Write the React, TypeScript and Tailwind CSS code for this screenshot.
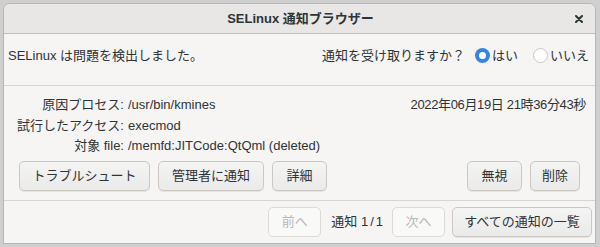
import React, { useState } from 'react';

function Btn({ children, disabled, className = '' }: { children: React.ReactNode; disabled?: boolean; className?: string }) {
  return (
    <button
      type="button"
      className={`h-[30px] rounded-[5px] border text-[13px] ${disabled ? 'border-[#dcdad7] bg-[#f9f9f8] text-[#b5b8b8]' : 'border-[#cdc7c2] bg-gradient-to-b from-[#f4f4f3] to-[#eaeaea] text-[#2e3436] shadow-[0_1px_0_rgba(0,0,0,0.07)]'} ${className}`}
    >
      {children}
    </button>
  );
}

function Radio({ checked, label, onClick }: { checked: boolean; label: string; onClick: () => void }) {
  return (
    <label className="flex items-center gap-[2px] cursor-pointer" onClick={onClick}>
      {checked ? (
        <span className="w-[15px] h-[15px] rounded-full bg-[#3584e4] flex items-center justify-center">
          <span className="w-[7px] h-[7px] rounded-full bg-white" />
        </span>
      ) : (
        <span className="w-[15px] h-[15px] rounded-full border border-[#cdc7c2] bg-white" />
      )}
      <span>{label}</span>
    </label>
  );
}

export default function App() {
  const [notify, setNotify] = useState(true);

  return (
    <div
      className="w-[600px] h-[247px] bg-[#cfcfcf] pt-[3px] px-[3px] pb-[3px]"
      style={{ fontFamily: '"Liberation Sans", "Noto Sans CJK JP", sans-serif' }}
    >
      <div className="w-[593px] h-[241px] rounded-t-[7px] border border-[#b8b6b3] bg-[#f6f5f4] text-[13px] text-[#2e3436] flex flex-col overflow-hidden">
        {/* title bar */}
        <div className="h-[30px] shrink-0 bg-[#e8e7e6] border-b border-[#c0bdba] flex items-center relative">
          <div className="flex-1 text-center font-bold text-[13px] pl-[2px]">SELinux 通知ブラウザー</div>
          <svg className="absolute right-[12px] top-[11px]" width="8" height="8" viewBox="0 0 8 8">
            <path d="M1 1 L7 7 M7 1 L1 7" stroke="#2e3436" strokeWidth="2" strokeLinecap="round" />
          </svg>
        </div>

        {/* question row */}
        <div className="h-[52px] shrink-0 flex items-center justify-between pl-[4px] pr-[6px] border-b border-[#d8d4d0] pb-[8px]">
          <span>SELinux は問題を検出しました。</span>
          <div className="flex items-center">
            <span className="mr-[10px]">通知を受け取りますか？</span>
            <Radio checked={notify} label="はい" onClick={() => setNotify(true)} />
            <span className="w-[15px]" />
            <Radio checked={!notify} label="いいえ" onClick={() => setNotify(false)} />
          </div>
        </div>

        {/* details */}
        <div className="shrink-0 pt-[9px] pl-[13px] pr-[9px] flex justify-between leading-[20.5px]">
          <div className="grid grid-cols-[auto_auto] gap-x-[4px]">
            <span className="text-right">原因プロセス:</span>
            <span>/usr/bin/kmines</span>
            <span className="text-right">試行したアクセス:</span>
            <span>execmod</span>
            <span className="text-right">対象 file:</span>
            <span>/memfd:JITCode:QtQml (deleted)</span>
          </div>
          <div className="tracking-[-0.35px]">2022年06月19日 21時36分43秒</div>
        </div>

        {/* action buttons */}
        <div className="shrink-0 flex items-center px-[15px] pt-[4px] pb-[9px] border-b border-[#d8d4d0]">
          <Btn className="w-[131px]">トラブルシュート</Btn>
          <Btn className="w-[106px] ml-[8px]">管理者に通知</Btn>
          <Btn className="w-[55px] ml-[8px]">詳細</Btn>
          <div className="flex-1" />
          <Btn className="w-[55px]">無視</Btn>
          <Btn className="w-[50px] ml-[8px]">削除</Btn>
        </div>

        {/* navigation */}
        <div className="flex-1 flex items-center justify-end pr-[3px]">
          <Btn disabled className="w-[53px]">前へ</Btn>
          <span className="ml-[10px] mr-[9px]">
            通知 1<span className="px-[2px]">/</span>1
          </span>
          <Btn disabled className="w-[53px]">次へ</Btn>
          <Btn className="w-[140px] ml-[7px]">すべての通知の一覧</Btn>
        </div>
      </div>
    </div>
  );
}
